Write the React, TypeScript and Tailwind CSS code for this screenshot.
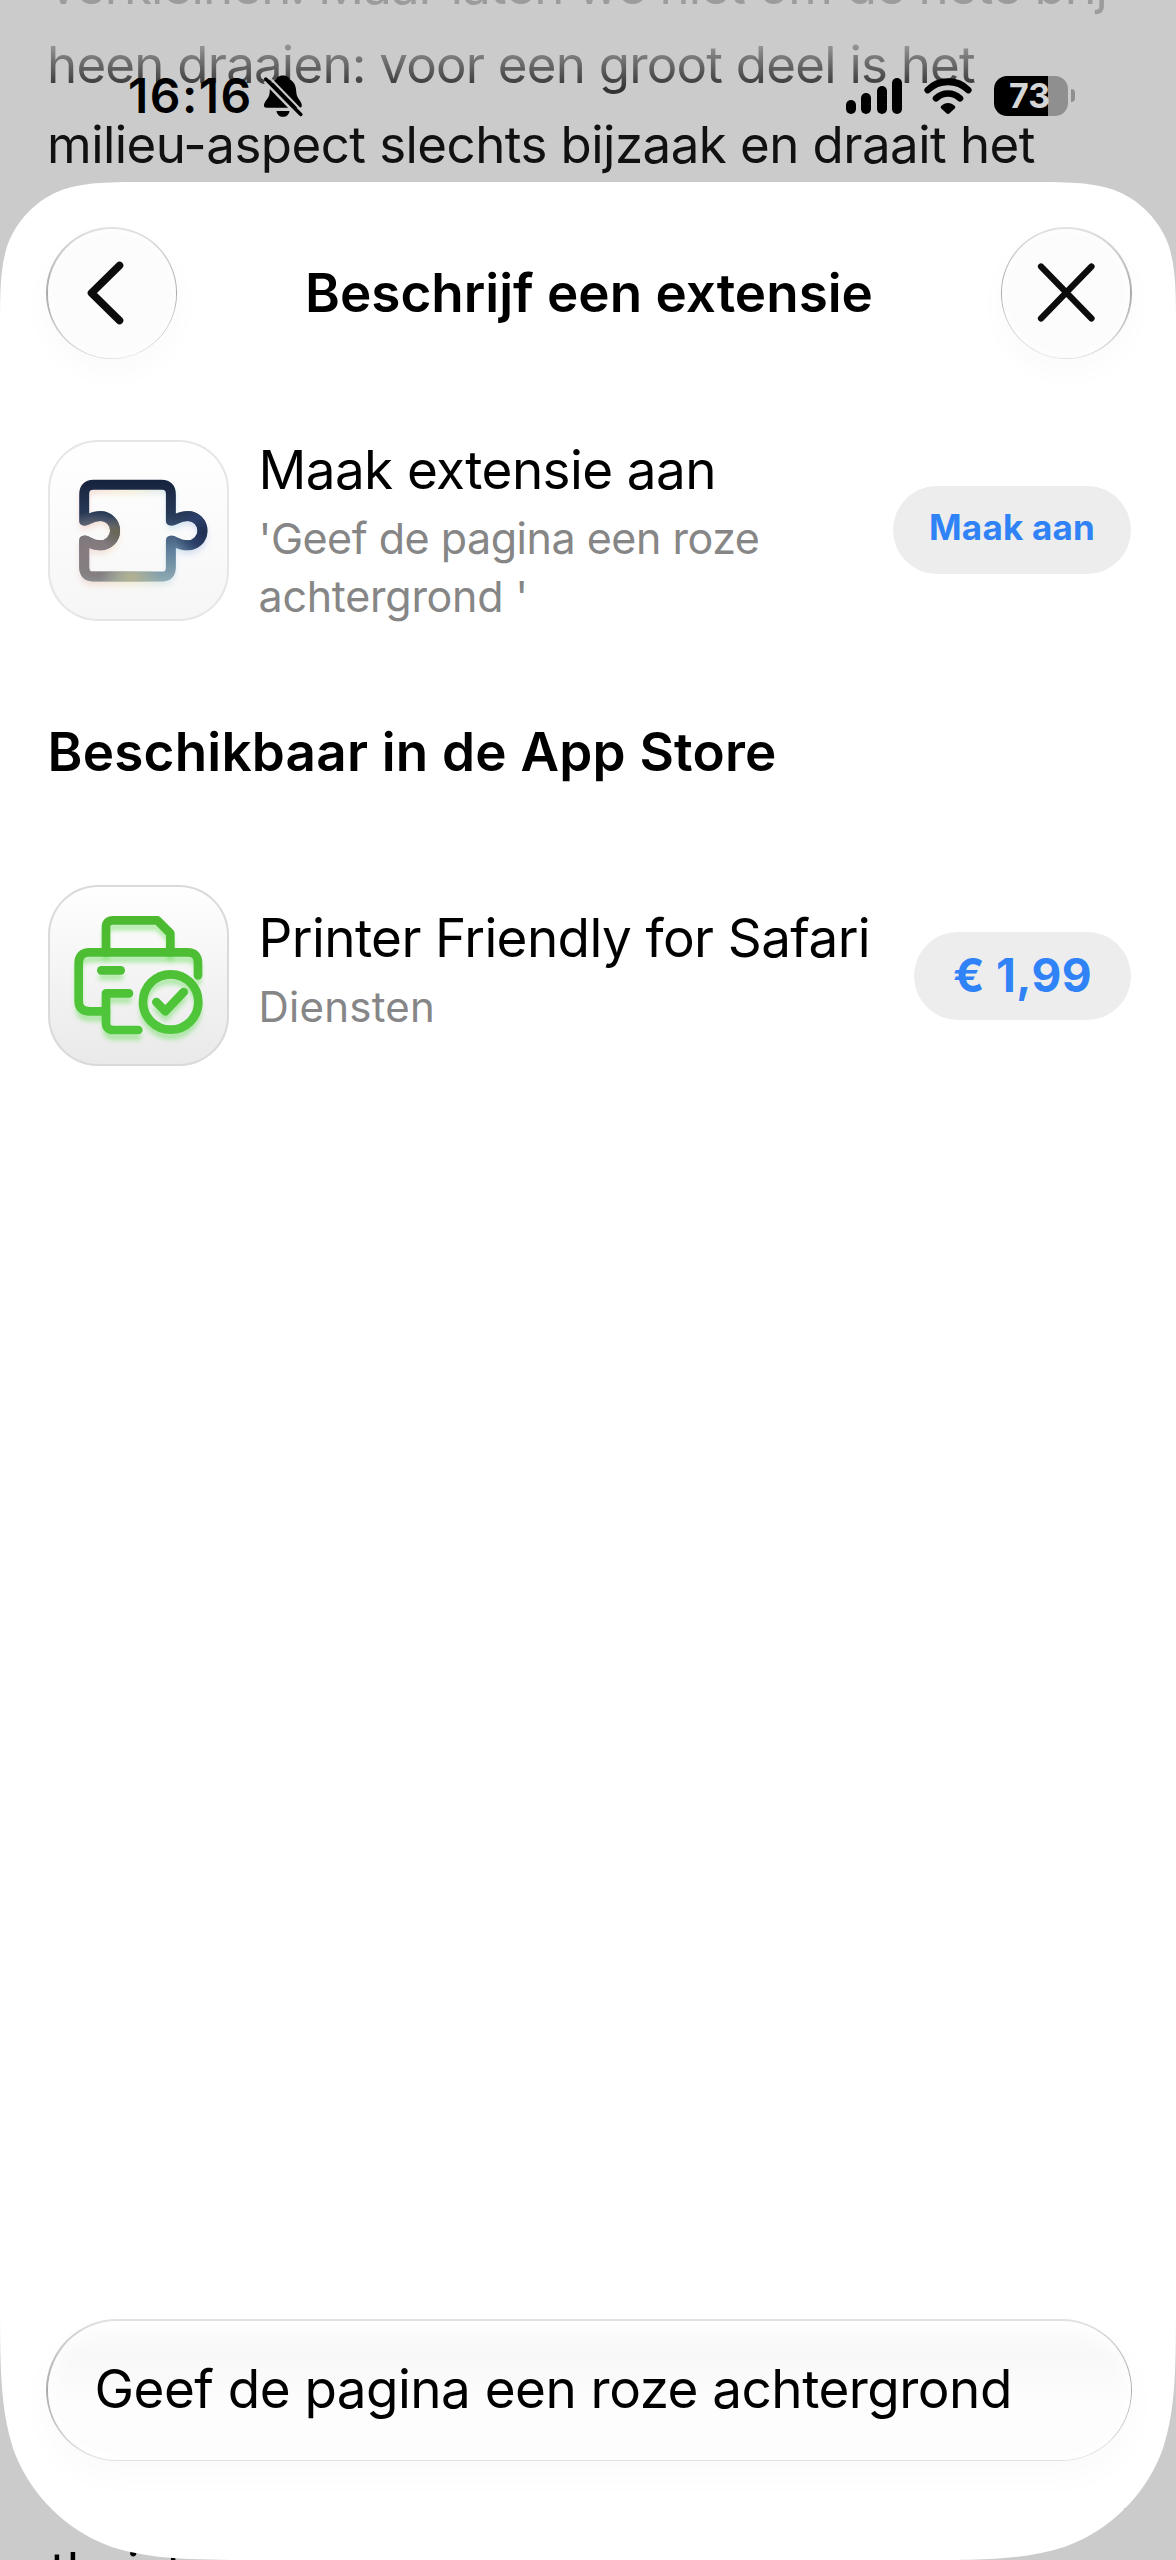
import { ReactNode } from 'react';

const PUZZLE =
    'M188 192 H393 Q421 192 421 220 V300 C433 302 439 286 472 286 A44 44 0 0 1 472 374 C439 374 433 358 421 360 V440 Q421 468 393 468 H188 Q160 468 160 440 V360 C172 358 176 374 209 374 A44 44 0 0 0 209 286 C176 286 172 302 160 300 V220 Q160 192 188 192 Z';

function StatusBar() {
    return (
        <div className="absolute inset-x-0 top-[74px] flex h-[43px] items-center justify-between pr-[101px] pl-[128px] text-black">
            <div className="flex items-center gap-[10px]">
                <span className="text-[48px] leading-[43px] font-semibold tracking-[1.5px]">16:16</span>
                <svg width="40" height="42" viewBox="0 0 40 42">
                    <path d="M20 0.5 C25 0.5 26 3 27 4.6 C32.5 7.6 33 13 33.4 18 C33.8 23.5 38.8 26 38.8 30.5 C38.8 32 38 32.7 36.5 32.7 H3.5 C2 32.7 1 32 1 30.5 C1 26 6.2 23.5 6.6 18 C7 13 7.5 7.6 13 4.6 C14 3 15 0.5 20 0.5 Z" />
                    <path d="M13.5 36 H26.5 C26 39.5 23.6 41.8 20 41.8 C16.4 41.8 14 39.5 13.5 36 Z" />
                    <path d="M1.5 6.5 L35.5 41.5" stroke="#cbcbcb" strokeWidth="2.8" />
                    <path d="M5.5 1.5 L39.5 36.5" stroke="#cbcbcb" strokeWidth="2" />
                    <path d="M2.8 4 L37.8 39.5" stroke="#000" strokeWidth="3.4" strokeLinecap="round" />
                </svg>
            </div>

            <div className="flex items-center">
                <div className="mr-[22px] flex h-[36px] items-end gap-[5.7px]">
                    <span className="h-[13.5px] w-[9.8px] rounded-full bg-black" />
                    <span className="h-[20.5px] w-[9.8px] rounded-full bg-black" />
                    <span className="h-[28px] w-[9.8px] rounded-full bg-black" />
                    <span className="h-[36px] w-[9.8px] rounded-full bg-black" />
                </div>
                <svg className="mr-[22px]" width="48" height="36" viewBox="0 0 48 36">
                    <path d="M3.8 12 C14.5 1 33.5 1 44.2 12" fill="none" stroke="#000" strokeWidth="6.8" strokeLinecap="round" />
                    <path d="M12 20.3 C18.8 13.8 29.2 13.8 36 20.3" fill="none" stroke="#000" strokeWidth="6.6" strokeLinecap="round" />
                    <path d="M17.2 28 C21 24 27 24 30.8 28 C31.6 29 31.4 29.8 30.7 30.5 L25.6 35.3 C24.5 36.2 23.5 36.2 22.4 35.3 L17.3 30.5 C16.6 29.8 16.4 29 17.2 28 Z" />
                </svg>
                <div className="flex items-center gap-[3px]">
                    <div className="flex h-[40px] w-[74px] items-center overflow-hidden rounded-[13px] bg-[linear-gradient(90deg,#000_73%,#8f8f8f_73%)] pl-[15px] text-[34px] leading-none font-bold text-[#d6d6d6]">
                        73
                    </div>
                    <div className="h-[13px] w-[4px] rounded-r-full bg-[#8f8f8f]" />
                </div>
            </div>
        </div>
    );
}

function RoundButton({ label, children }: { label: string; children: ReactNode }) {
    return (
        <button
            aria-label={label}
            className="h-[132px] w-[131px] rounded-full bg-[linear-gradient(180deg,#e2e2e2,#aaaaaa_50%,#e2e2e2)] p-[1.5px] shadow-[0_12px_32px_rgba(0,0,0,0.025)]"
        >
            <span className="flex h-full w-full items-center justify-center rounded-full bg-[#fcfcfc] shadow-[inset_0_0_14px_#ffffff]">
                {children}
            </span>
        </button>
    );
}

function PuzzleIcon() {
    return (
        <svg className="h-full w-full" viewBox="52 57 543 545" fill="none">
            <defs>
                <linearGradient id="base" gradientUnits="userSpaceOnUse" x1="0" y1="180" x2="0" y2="480">
                    <stop offset="0" stopColor="#17233e" />
                    <stop offset="0.35" stopColor="#273a58" />
                    <stop offset="0.7" stopColor="#5f7f9d" />
                    <stop offset="1" stopColor="#8faab2" />
                </linearGradient>
                <radialGradient id="warm" gradientUnits="userSpaceOnUse" cx="190" cy="400" r="130">
                    <stop offset="0" stopColor="#8a7d80" />
                    <stop offset="0.5" stopColor="#85797a" stopOpacity="0.85" />
                    <stop offset="1" stopColor="#85797a" stopOpacity="0" />
                </radialGradient>
                <radialGradient id="sand" gradientUnits="userSpaceOnUse" cx="300" cy="470" r="90">
                    <stop offset="0" stopColor="#b3b190" />
                    <stop offset="1" stopColor="#b3b190" stopOpacity="0" />
                </radialGradient>
                <radialGradient id="olive" gradientUnits="userSpaceOnUse" cx="258" cy="335" r="50">
                    <stop offset="0" stopColor="#6c6654" />
                    <stop offset="1" stopColor="#6c6654" stopOpacity="0" />
                </radialGradient>
                <radialGradient id="navy" gradientUnits="userSpaceOnUse" cx="520" cy="335" r="90">
                    <stop offset="0" stopColor="#1f2c50" />
                    <stop offset="0.5" stopColor="#2c4069" />
                    <stop offset="1" stopColor="#2c4069" stopOpacity="0" />
                </radialGradient>
                <linearGradient id="glow" gradientUnits="userSpaceOnUse" x1="140" y1="0" x2="530" y2="0">
                    <stop offset="0" stopColor="#e8a8a8" />
                    <stop offset="0.4" stopColor="#e8dca0" />
                    <stop offset="0.75" stopColor="#a5cfe8" />
                    <stop offset="1" stopColor="#9aa5e0" />
                </linearGradient>
                <filter id="soft" x="-20%" y="-20%" width="140%" height="140%">
                    <feGaussianBlur stdDeviation="10" />
                </filter>
            </defs>
            <path d={PUZZLE} transform="translate(0 14)" stroke="url(#glow)" strokeWidth="24" strokeOpacity="0.45" filter="url(#soft)" />
            <path d={PUZZLE} stroke="url(#base)" strokeWidth="30" strokeLinejoin="round" />
            <path d={PUZZLE} stroke="url(#warm)" strokeWidth="30" strokeLinejoin="round" />
            <path d={PUZZLE} stroke="url(#olive)" strokeWidth="30" strokeLinejoin="round" />
            <path d={PUZZLE} stroke="url(#sand)" strokeWidth="30" strokeLinejoin="round" />
            <path d={PUZZLE} stroke="url(#navy)" strokeWidth="30" strokeLinejoin="round" />
        </svg>
    );
}

function PrinterShape() {
    return (
        <>
            <path d="M226 757 V682 Q226 661 247 661 H380 L419 700 V757" />
            <path d="M502 826 V790 Q502 757 470 757 H177 Q144 757 144 790 V902 Q144 934 177 934 H226" />
            <path d="M212 811 H270" />
            <path d="M295 880 H226 V968 Q226 990 248 990 H323" />
            <circle cx="420" cy="906" r="83" />
            <path d="M377 906 L404 934 L459 876" />
        </>
    );
}

function PrinterIcon() {
    return (
        <svg className="h-full w-full" viewBox="52 555 543 543" fill="none" strokeLinecap="round" strokeLinejoin="round">
            <defs>
                <linearGradient id="green" gradientUnits="userSpaceOnUse" x1="0" y1="645" x2="0" y2="1005">
                    <stop offset="0" stopColor="#4cb92f" />
                    <stop offset="1" stopColor="#50c83c" />
                </linearGradient>
                <filter id="drop" x="-20%" y="-20%" width="140%" height="140%">
                    <feGaussianBlur stdDeviation="8" />
                </filter>
            </defs>
            <g transform="translate(0 20)" stroke="#6fe063" strokeOpacity="0.6" strokeWidth="18" filter="url(#drop)">
                <PrinterShape />
            </g>
            <g stroke="url(#green)" strokeWidth="26">
                <PrinterShape />
            </g>
        </svg>
    );
}

export default function App() {
    return (
        <div className="relative h-[2560px] w-[1176px] overflow-hidden bg-[#cbcbcb] font-[Inter,sans-serif]">
            {/* Article behind the sheet */}
            <div className="-mt-[54px] pl-[47px] text-[51px] leading-[79.4px] whitespace-nowrap text-[#111111]">
                <p className="pl-[2px] tracking-[-0.83px] text-[#9c9c9c]">verkleinen. Maar laten we niet om de hete brij</p>
                <p className="bg-gradient-to-b from-[#a0a0a0] from-20% to-[#333333] to-80% bg-clip-text tracking-[-0.77px] text-transparent">
                    heen draaien: voor een groot deel is het
                </p>
                <p className="tracking-[-0.54px]">milieu-aspect slechts bijzaak en draait het</p>
                <p className="mt-[2347px] pl-[3px] text-black">thuist</p>
            </div>
            <span className="absolute top-[2507px] left-[1123px] h-[2px] w-[2px] bg-black" />

            <StatusBar />

            {/* Sheet */}
            <div className="absolute inset-x-0 top-[182px] flex h-[2378px] flex-col bg-white pt-[45px] pr-[44px] pb-[99px] pl-[46px] [clip-path:path('M0_152.9C0_108.8_0_86.8_7.5_63.1C16.9_37.3_37.3_16.9_63.1_7.5C86.8_0_108.8_0_152.9_0H1023.1C1067.2_0_1089.2_0_1112.9_7.5C1138.7_16.9_1159.1_37.3_1168.5_63.1C1176_86.8_1176_108.8_1176_152.9V2109C1176_2186.4_1176_2225.2_1162.8_2266.9C1146.2_2312.4_1110.4_2348.2_1064.9_2364.8C1023.2_2378_984.4_2378_907_2378H269C191.6_2378_152.8_2378_111.1_2364.8C65.6_2348.2_29.8_2312.4_13.2_2266.9C0_2225.2_0_2186.4_0_2109Z')]">
                <div className="flex items-center justify-between">
                    <RoundButton label="Terug">
                        <svg className="mr-[2px]" width="60" height="70" viewBox="0 0 60 70" fill="none">
                            <path d="M38.5 7.5 L10.5 35 L38.5 62.5" stroke="#0c0c0c" strokeWidth="7.6" strokeLinecap="round" strokeLinejoin="round" />
                        </svg>
                    </RoundButton>
                    <h1 className="text-[53px] leading-none font-semibold">Beschrijf een extensie</h1>
                    <RoundButton label="Sluit">
                        <svg width="60" height="60" viewBox="0 0 60 60" fill="none">
                            <path d="M5 3.5 L55.5 55.5 M55.5 3.5 L5 55.5" stroke="#0c0c0c" strokeWidth="6.2" strokeLinecap="round" />
                        </svg>
                    </RoundButton>
                </div>

                <div className="mt-[81px] flex items-center pr-[1px] pl-[1.5px]">
                    <div className="h-[181px] w-[181px] shrink-0 rounded-[50px] bg-gradient-to-b from-white to-[#f6f6f6] shadow-[inset_0_0_0_2px_#e6e6e6]">
                        <PuzzleIcon />
                    </div>
                    <div className="-my-2 ml-[30px] flex-1 pb-[4px]">
                        <h2 className="text-[53px] leading-[75px] tracking-[-0.6px]">Maak extensie aan</h2>
                        <p className="mt-[1px] text-[43px] leading-[58px] tracking-[-0.48px] text-[#868686]">
                            'Geef de pagina een roze
                            <br />
                            <span className="tracking-[-0.26px]">achtergrond '</span>
                        </p>
                    </div>
                    <button className="mb-[2px] h-[88px] w-[238px] rounded-full bg-[#ededed] pb-[5px] text-[35px] leading-none font-bold tracking-[0.2px] text-[#3083f7]">
                        Maak aan
                    </button>
                </div>

                <div className="flex h-[264px] items-center pl-[1.5px]">
                    <h2 className="text-[53px] font-semibold tracking-[0.22px]">Beschikbaar in de App Store</h2>
                </div>

                <div className="flex items-center pr-[1px] pl-[1.5px]">
                    <div className="h-[181px] w-[181px] shrink-0 rounded-[50px] bg-gradient-to-b from-white to-[#e9e9e9] shadow-[inset_0_0_0_2px_#dadada]">
                        <PrinterIcon />
                    </div>
                    <div className="ml-[30px] flex-1 pb-[15px]">
                        <h2 className="text-[53px] leading-[75px] tracking-[-0.6px] whitespace-nowrap">Printer Friendly for Safari</h2>
                        <p className="mt-[2px] text-[42px] leading-[58px] tracking-[0.25px] text-[#868688]">Diensten</p>
                    </div>
                    <button className="h-[88px] w-[217px] rounded-full bg-[#ededed] pb-[2px] text-[46px] leading-none font-bold tracking-[0.4px] text-[#3083f7]">
                        € 1,99
                    </button>
                </div>

                <div className="mt-auto h-[142px] rounded-full bg-[linear-gradient(180deg,#e2e2e2,#aaaaaa_50%,#e2e2e2)] p-[1.5px] shadow-[0_14px_36px_rgba(0,0,0,0.025)]">
                    <div className="flex h-full items-center rounded-full bg-gradient-to-b from-[#fdfdfd] via-[#f8f8f8] via-25% to-[#fdfdfd] to-60% pl-[47px] text-[53px] tracking-[-0.53px] shadow-[inset_0_0_24px_#ffffff]">
                        Geef de pagina een roze achtergrond
                    </div>
                </div>
            </div>
        </div>
    );
}
